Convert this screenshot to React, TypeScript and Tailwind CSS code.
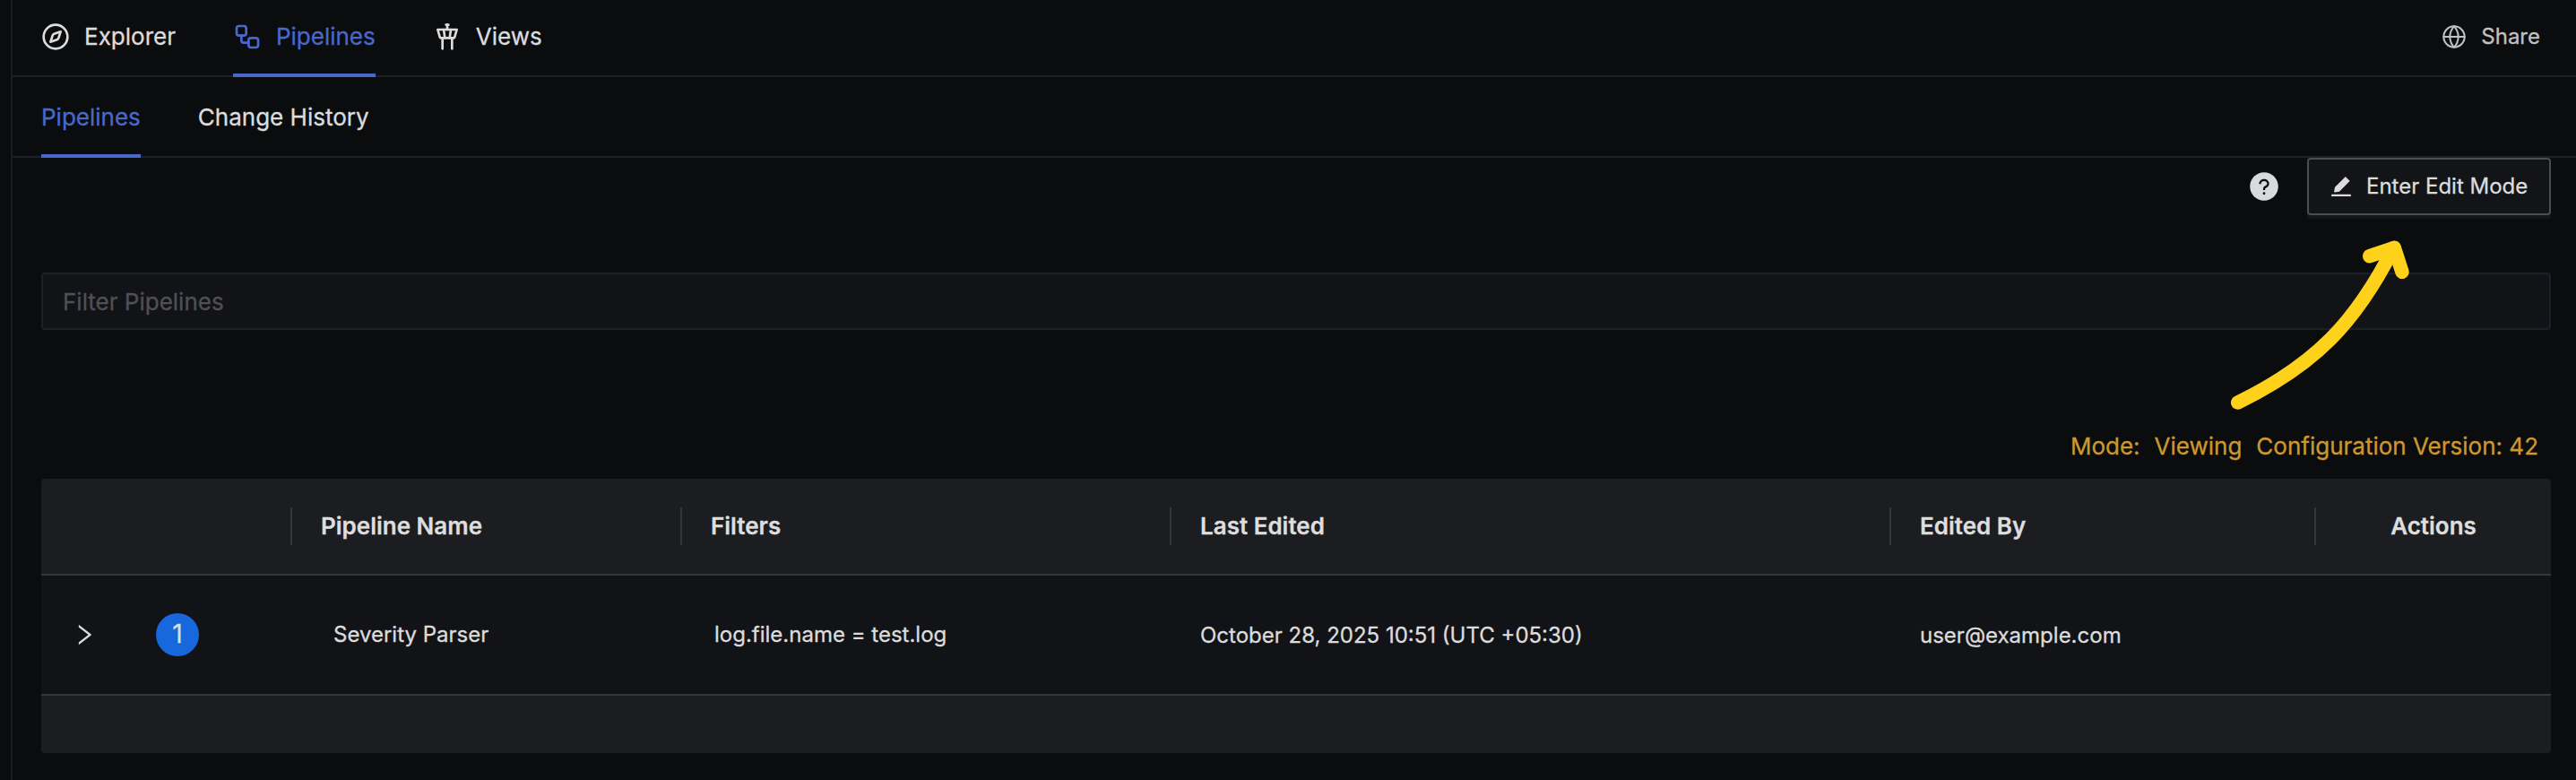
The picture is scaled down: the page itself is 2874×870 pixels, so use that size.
import { Compass, Globe, TowerControl, Workflow } from 'lucide-react';
import { AiFillEdit, AiFillQuestionCircle, AiOutlineRight } from 'react-icons/ai';

const mainTabs = [
    { label: 'Explorer',  icon: Compass,      active: false },
    { label: 'Pipelines', icon: Workflow,     active: true },
    { label: 'Views',     icon: TowerControl, active: false },
];

const subTabs = [
    { label: 'Pipelines',      active: true },
    { label: 'Change History', active: false },
];

const columns = ['', 'Pipeline Name', 'Filters', 'Last Edited', 'Edited By'];

const pipelines = [
    {
        order: 1,
        name: 'Severity Parser',
        filter: 'log.file.name = test.log',
        editedAt: 'October 28, 2025 10:51 (UTC +05:30)',
        editedBy: 'user@example.com',
    },
];

const gridCols = 'grid grid-cols-[280px_435px_546px_803px_474px_262px] items-center';

function TopBar() {
    return (
        <header className="flex h-[86px] justify-between border-b-2 border-[#1d1f29] pl-8 pr-10">
            <nav className="flex gap-16">
                {mainTabs.map(({ label, icon: Icon, active }) => (
                    <button
                        key={label}
                        className={`-mb-0.5 flex h-[86px] items-center gap-4 border-b-4 ${
                            active ? 'border-[#4a68cb] text-[#4a68cb]' : 'border-transparent text-[#dcdcdd]'
                        }`}
                    >
                        <Icon size={32} strokeWidth={2} />
                        <span>{label}</span>
                    </button>
                ))}
            </nav>
            <button className="flex h-[82px] items-center gap-4 text-2xl text-[#c0c1c3]">
                <Globe size={28} strokeWidth={1.75} />
                Share
            </button>
        </header>
    );
}

function SubTabs() {
    return (
        <nav className="flex h-[90px] gap-16 border-b-2 border-[#1d1f29] pl-8">
            {subTabs.map((tab) => (
                <button
                    key={tab.label}
                    className={`-mb-0.5 flex h-[90px] items-center border-b-4 pt-1 ${
                        tab.active ? 'border-[#4a68cb] text-[#4a68cb]' : 'border-transparent text-[#dcdcdd]'
                    }`}
                >
                    {tab.label}
                </button>
            ))}
        </nav>
    );
}

function PipelineTable() {
    return (
        <div className="overflow-hidden rounded-sm bg-[#1c1d20]">
            <div className={`${gridCols} h-[108px] border-b-2 border-[#35373c] font-semibold text-[#dededf]`}>
                {columns.map((col) => (
                    <div key={col} className="flex h-[42px] items-center border-r-2 border-[#34363a] pl-8">
                        {col}
                    </div>
                ))}
                <div className="text-center">Actions</div>
            </div>
            {pipelines.map((p) => (
                <div
                    key={p.order}
                    className={`${gridCols} h-[134px] border-b-2 border-[#35373c] bg-[#121317] text-2xl text-[#dcdcdd]`}
                >
                    <div className="flex items-center pl-[33px]">
                        <AiOutlineRight size={30} />
                        <span className="ml-[65px] flex size-12 items-center justify-center rounded-full bg-[#1668dc] text-[28px]">
                            {p.order}
                        </span>
                    </div>
                    <div className="pl-[46px]">{p.name}</div>
                    <div className="pl-9">{p.filter}</div>
                    <div className="pl-8 pt-0.5">{p.editedAt}</div>
                    <div className="pl-8 pt-0.5">{p.editedBy}</div>
                    <div />
                </div>
            ))}
            <div className="h-16" />
        </div>
    );
}

// pointer towards the edit button, floats above the page
function Arrow() {
    return (
        <svg
            className="pointer-events-none absolute left-[2480px] top-[260px]"
            width="220"
            height="210"
            viewBox="2480 260 220 210"
            fill="none"
            stroke="#fed21a"
            strokeWidth="15.5"
            strokeLinecap="round"
            strokeLinejoin="round"
        >
            <path d="M2496.7 449C2583 407 2628 360 2670.5 276.5" />
            <path d="M2643.7 285.7L2671.3 276.3L2680 303.3" />
        </svg>
    );
}

export default function App() {
    return (
        <div className="relative h-[870px] w-[2874px] overflow-hidden bg-[#0b0c0e] pl-3 font-['Inter',sans-serif] text-[26px] leading-8 [-webkit-text-stroke:0.3px]">
            <div className="h-full border-l-2 border-[#1b1c1f]">
                <TopBar />
                <SubTabs />
                <main className="pl-8 pr-7">
                    <div className="flex items-center justify-end gap-[30px]">
                        <AiFillQuestionCircle size={36} className="text-[#d9dadb]" />
                        <button className="flex h-16 w-[272px] items-center gap-3.5 rounded border-2 border-[#4b4d53] bg-[#121417] pl-[22px] text-2xl text-[#dcdcdd] shadow-[0_4px_0_#14161a]">
                            <AiFillEdit size={28} />
                            Enter Edit Mode
                        </button>
                    </div>
                    <input
                        placeholder="Filter Pipelines"
                        className="mt-16 block h-16 w-full rounded border-2 border-[#1d1f29] bg-[#121317] px-[22px] placeholder:text-[#4f5053]"
                    />
                    <div className="mt-[114px] flex justify-end gap-4 pr-[14px] text-[#cd982e]">
                        <span>Mode:</span>
                        <span>Viewing</span>
                        <span>Configuration Version: 42</span>
                    </div>
                    <div className="mt-5">
                        <PipelineTable />
                    </div>
                </main>
            </div>
            <Arrow />
        </div>
    );
}
